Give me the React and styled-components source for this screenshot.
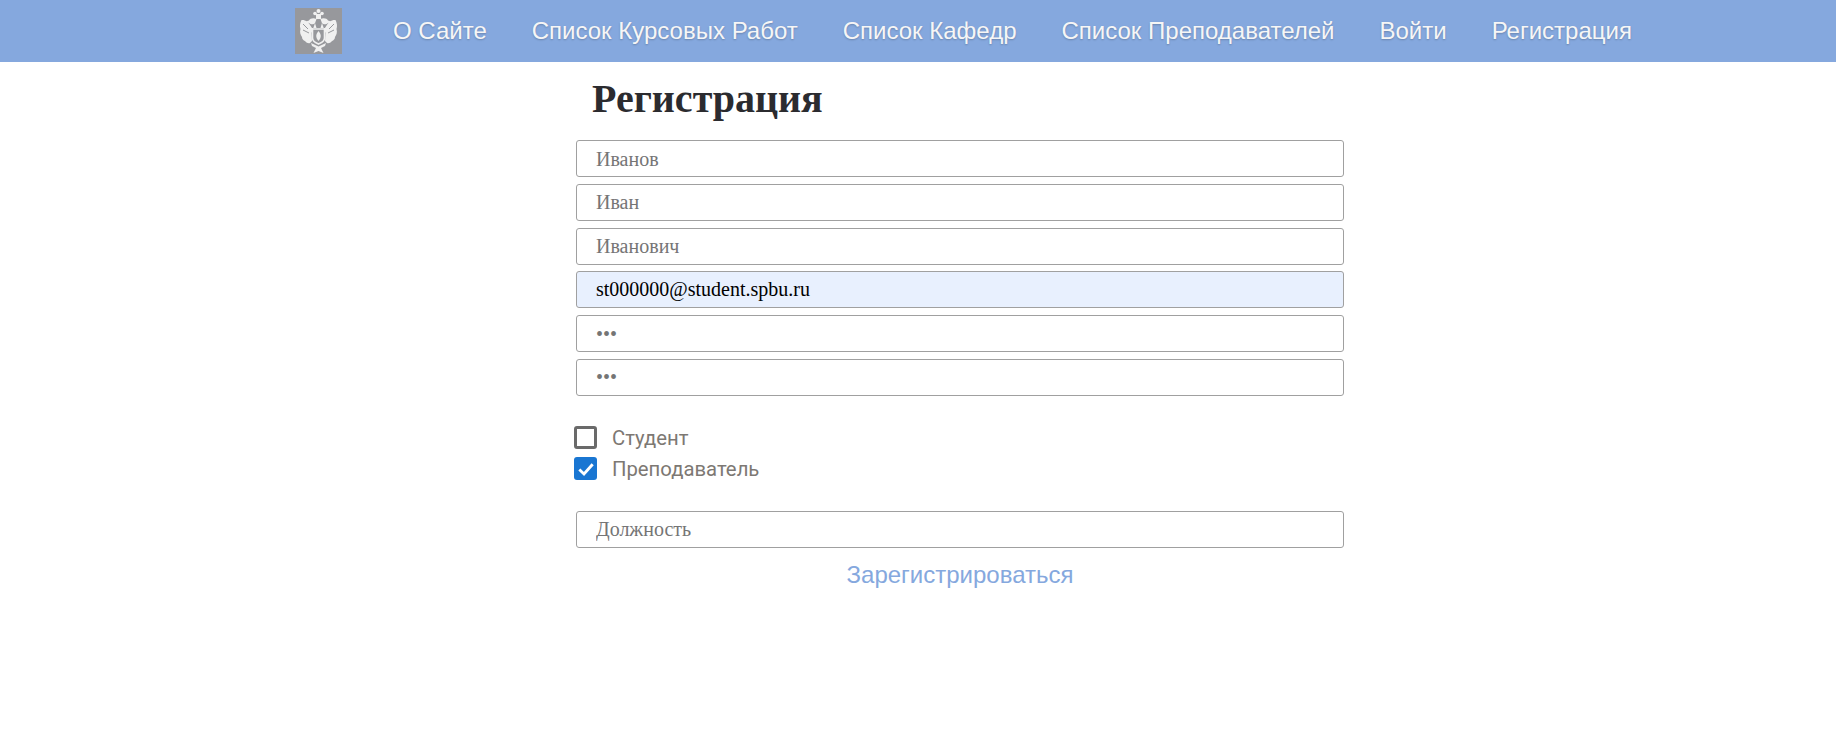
import React from "react";
import styled, { createGlobalStyle } from "styled-components";

const Global = createGlobalStyle`
  html, body { margin: 0; padding: 0; background: #fff; }
  body { font-family: "Liberation Serif", serif; }
`;
const Header = styled.header`
  height: 62px; background: #85a8de; display: flex; align-items: center; padding-left: 295px;
`;
const Logo = styled.div`
  width: 47px; height: 46px; background: #97989c; display: flex; align-items: center; justify-content: center; margin-right: 51px;
`;
const Nav = styled.nav`display: flex; gap: 45px;`;
const NavLink = styled.a`
  font: 24px "Liberation Sans", sans-serif; color: #f6f6f6; text-shadow: 0 1px 2px rgba(0,0,0,.22); white-space: nowrap;
`;
const Main = styled.main`
  width: 768px; margin-left: 576px; display: flex; flex-direction: column;
`;
const Title = styled.h1`
  margin: 11px 0 16px 16px; font: bold 40px/51px "Liberation Serif", serif; color: #2b2b2f;
`;
const Fields = styled.div`display: flex; flex-direction: column; gap: 6.75px;`;
const Input = styled.input`
  box-sizing: border-box; width: 100%; height: 37px; padding: ${p => p.$filled ? "0" : "1px"} 19px 0; margin: 0;
  border: 1px solid #a0a0a0; border-radius: 3px; background: ${p => p.$filled ? "#e8f0fe" : "#fff"};
  font: 20px "Liberation Serif", serif; color: #000; outline: none;
  &::placeholder { color: #757575; opacity: 1; }
`;
const Checks = styled.div`
  display: flex; flex-direction: column; gap: 9px; margin: 31px 0 31px -2px;
`;
const CheckRow = styled.label`
  display: flex; align-items: center; gap: 16px; height: 22px;
  font: 20.3px "Roboto", sans-serif; color: #7d7873;
`;
const Box = styled.span`
  box-sizing: border-box; width: 23px; height: 23px; border-radius: 3px; display: flex; align-items: center; justify-content: center; margin-right: -1px;
  background: ${p => p.$checked ? "#1976d2" : "#fff"};
  border: ${p => p.$checked ? "none" : "3px solid #6a6a6a"};
`;
const Submit = styled.button`
  align-self: center; margin-top: 13px; padding: 0; border: 0; background: none;
  font: 24px "Liberation Sans", sans-serif; color: #85a8de; cursor: pointer;
`;

const Crest = () => (
  <svg width="39" height="46" viewBox="0 0 39 46" fill="#f0f0f0">
    <circle cx="19.5" cy="3" r="2" />
    <circle cx="16" cy="5.5" r="1.8" />
    <circle cx="23" cy="5.5" r="1.8" />
    <rect x="17" y="6" width="5" height="5" />
    <path d="M17.5 11 C15 9.5 11 10 10 12.5 L7 13.5 L10 15 C12 17 15 16.5 16 15 L17.5 20 H13 C10 14 6 11.5 2.5 12 C1 15 0.5 18 1.5 21 C0.5 24 1.5 27 3 29 C3 31 4.5 32.5 6 33 C7.5 35 9.5 35.5 11 35 L13 33 L12.5 25 Z" />
    <path d="M21.5 11 C24 9.5 28 10 29 12.5 L32 13.5 L29 15 C27 17 24 16.5 23 15 L21.5 20 H26 C29 14 33 11.5 36.5 12 C38 15 38.5 18 37.5 21 C38.5 24 37.5 27 36 29 C36 31 34.5 32.5 33 33 C31.5 35 29.5 35.5 28 35 L26 33 L26.5 25 Z" />
    <path fill="#97989c" d="M4 16 L9 21 M4 22 L10 25" stroke="#97989c" strokeWidth="1" />
    <path fill="#97989c" d="M35 16 L30 21 M35 22 L29 25" stroke="#97989c" strokeWidth="1" />
    <path fill="none" stroke="#f0f0f0" strokeWidth="1.6" d="M13.5 21 H25.5 V30 C25.5 34 21.5 35 19.5 36 C17.5 35 13.5 34 13.5 30Z" />
    <path d="M19.5 23 C22 26 23 29 19.5 33 C16 29 17 26 19.5 23Z" />
    <path d="M12 35 L19.5 38.5 L27 35 L26 38 L22 40 L24.5 45 L19.5 43 L14.5 45 L17 40 L13 38Z" />
  </svg>
);

const links = ["О Сайте", "Список Курсовых Работ", "Список Кафедр", "Список Преподавателей", "Войти", "Регистрация"];

export default function App() {
  return (
    <>
      <Global />
      <Header>
        <Logo><Crest /></Logo>
        <Nav>{links.map(l => <NavLink key={l}>{l}</NavLink>)}</Nav>
      </Header>
      <Main>
        <Title>Регистрация</Title>
        <Fields>
          <Input placeholder="Иванов" />
          <Input placeholder="Иван" />
          <Input placeholder="Иванович" />
          <Input $filled defaultValue="st000000@student.spbu.ru" />
          <Input type="password" placeholder="•••" />
          <Input type="password" placeholder="•••" />
        </Fields>
        <Checks>
          <CheckRow><Box />Студент</CheckRow>
          <CheckRow>
            <Box $checked>
              <svg width="20" height="20" viewBox="0 0 18 18" fill="none" stroke="#fff" strokeWidth="2.6"><path d="M3 9.5 L7.2 13.5 L15 4.8" /></svg>
            </Box>
            Преподаватель
          </CheckRow>
        </Checks>
        <Input placeholder="Должность" />
        <Submit>Зарегистрироваться</Submit>
      </Main>
    </>
  );
}
